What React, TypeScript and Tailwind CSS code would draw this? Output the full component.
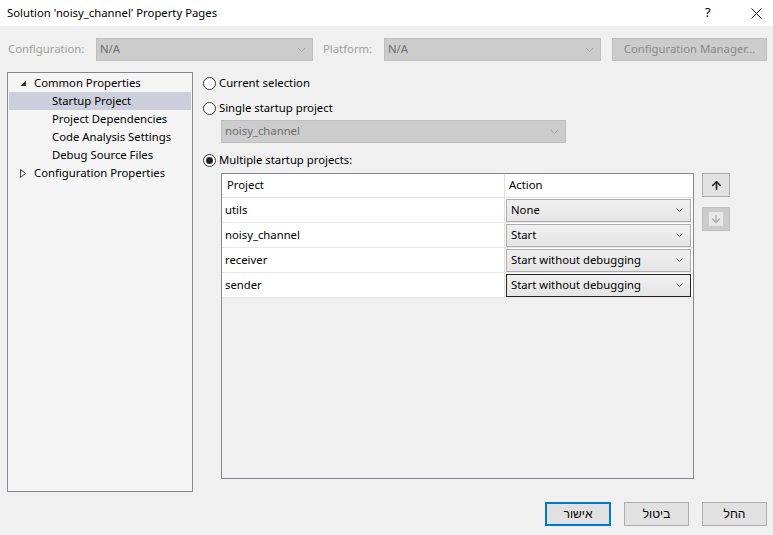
import { ArrowUp, ArrowDown } from 'lucide-react'

const font = { fontFamily: '"Noto Sans", "Liberation Sans", "DejaVu Sans", sans-serif' }

function Chevron({ light }: { light?: boolean }) {
  return (
    <svg width="9" height="6" viewBox="0 0 9 6" className="shrink-0">
      <path d="M1 1 L4.5 4.5 L8 1" fill="none" stroke={light ? '#a8a8a8' : '#606060'} strokeWidth="1" />
    </svg>
  )
}

function Radio({ checked, label }: { checked?: boolean; label: string }) {
  return (
    <div className="flex items-center gap-[3px] h-[18px]">
      <span className="w-[13px] h-[13px] rounded-full border border-[#333] bg-white flex items-center justify-center">
        {checked && <span className="w-[7px] h-[7px] rounded-full bg-[#222]" />}
      </span>
      <span className="text-[11.3px] text-black">{label}</span>
    </div>
  )
}

const treeChildren = ['Startup Project', 'Project Dependencies', 'Code Analysis Settings', 'Debug Source Files']

const rows = [
  { project: 'utils', action: 'None' },
  { project: 'noisy_channel', action: 'Start' },
  { project: 'receiver', action: 'Start without debugging' },
  { project: 'sender', action: 'Start without debugging' },
]

export default function App() {
  return (
    <div style={font} className="w-[773px] h-[535px] bg-[#f0f0f0] flex flex-col overflow-hidden text-black text-[11.3px]">
      {/* title bar */}
      <div className="h-[26px] bg-white flex items-center pl-[7px]">
        <span className="flex-1">Solution 'noisy_channel' Property Pages</span>
        <span className="w-[14px] text-[13px] mr-[32px]">?</span>
        <svg width="11" height="11" viewBox="0 0 11 11" className="mr-[11px]">
          <path d="M0.5 0.5 L10.5 10.5 M10.5 0.5 L0.5 10.5" stroke="#111" strokeWidth="1" />
        </svg>
      </div>

      {/* configuration row */}
      <div className="mt-[12px] h-[23px] flex items-center">
        <span className="w-[96px] pl-[8px] text-[#a0a0a0]">Configuration:</span>
        <div className="w-[217px] h-[23px] bg-[#cccccc] border border-[#bfbfbf] flex items-center pl-[3px] pr-[6px] text-[#6d6d6d]">
          <span className="flex-1">N/A</span>
          <Chevron light />
        </div>
        <span className="w-[71px] pl-[10px] text-[#a0a0a0]">Platform:</span>
        <div className="w-[217px] h-[23px] bg-[#cccccc] border border-[#bfbfbf] flex items-center pl-[3px] pr-[6px] text-[#6d6d6d]">
          <span className="flex-1">N/A</span>
          <Chevron light />
        </div>
        <div className="ml-[11px] w-[155px] h-[23px] bg-[#cccccc] border border-[#bfbfbf] flex items-center justify-center text-[#8a8a8a]">
          Configuration Manager...
        </div>
      </div>

      {/* main */}
      <div className="mt-[11px] flex pl-[7px]">
        <div className="w-[186px] h-[420px] bg-[#f5f5f5] border border-[#828790] pt-[1px] px-[1px]">
          <div className="h-[18px] flex items-center">
            <svg width="7" height="7" viewBox="0 0 7 7" className="ml-[11px] mr-[7px]">
              <path d="M6 0.5 L6 6 L0.5 6 Z" fill="#333" />
            </svg>
            <span>Common Properties</span>
          </div>
          {treeChildren.map((t, i) => (
            <div key={t} className={`h-[18px] flex items-center pl-[43px] ${i === 0 ? 'bg-[#cccedb]' : ''}`}>
              {t}
            </div>
          ))}
          <div className="h-[18px] flex items-center">
            <svg width="7" height="9" viewBox="0 0 7 9" className="ml-[11px] mr-[7px]">
              <path d="M0.5 0.5 L5.5 4.5 L0.5 8.5 Z" fill="none" stroke="#444" strokeWidth="1" />
            </svg>
            <span>Configuration Properties</span>
          </div>
        </div>

        <div className="ml-[10px] pt-[2px] flex flex-col">
          <Radio label="Current selection" />
          <div className="mt-[7px]">
            <Radio label="Single startup project" />
          </div>
          <div className="ml-[18px] mt-[3px] w-[345px] h-[23px] bg-[#cccccc] border border-[#bfbfbf] flex items-center pl-[3px] pr-[6px] text-[#6d6d6d]">
            <span className="flex-1">noisy_channel</span>
            <Chevron light />
          </div>
          <div className="mt-[8px]">
            <Radio checked label="Multiple startup projects:" />
          </div>

          <div className="flex mt-[4px] ml-[18px]">
            <div className="w-[473px] h-[306px] border border-[#828790] bg-[#f0f0f0]">
              <div className="flex h-[24px] bg-white border-b border-[#e0e0e0]">
                <div className="w-[283px] border-r border-[#e0e0e0] flex items-center pl-[5px]">Project</div>
                <div className="flex-1 flex items-center pl-[4px]">Action</div>
              </div>
              {rows.map((r, i) => (
                <div key={r.project} className="flex h-[25px] bg-white border-b border-[#e8e8e8]">
                  <div className="w-[283px] border-r border-[#e0e0e0] flex items-center pl-[3px]">{r.project}</div>
                  <div className="flex-1 flex items-center pl-[1px] pr-[2px]">
                    <div
                      className={`w-full h-[23px] flex items-center pl-[4px] pr-[7px] bg-gradient-to-b from-[#f0f0f0] to-[#e5e5e5] border ${
                        i === 3 ? 'border-[#222]' : 'border-[#acacac]'
                      }`}
                    >
                      <span className="flex-1">{r.action}</span>
                      <svg width="7" height="4" viewBox="0 0 7 4">
                        <path d="M0.5 0.5 L3.5 3.5 L6.5 0.5" fill="none" stroke="#555" strokeWidth="1" />
                      </svg>
                    </div>
                  </div>
                </div>
              ))}
            </div>

            <div className="ml-[8px] flex flex-col">
              <div className="w-[28px] h-[24px] bg-[#e1e1e1] border border-[#adadad] flex items-center justify-center">
                <ArrowUp size={13} strokeWidth={3} color="#222" />
              </div>
              <div className="mt-[10px] w-[28px] h-[24px] bg-[#cccccc] border border-[#bfbfbf] flex items-center justify-center">
                <div className="bg-[#e8e8e8] w-[14px] h-[14px] flex items-center justify-center">
                  <ArrowDown size={12} strokeWidth={2.5} color="#aaaaaa" />
                </div>
              </div>
            </div>
          </div>
        </div>
      </div>

      {/* bottom buttons */}
      <div className="mt-[10px] flex justify-end pr-[6px] gap-[13px] text-[12px]">
        <div dir="rtl" className="w-[66px] h-[24px] bg-[#e1e1e1] border-2 border-[#0078d7] flex items-center justify-center">
          אישור
        </div>
        <div dir="rtl" className="w-[65px] h-[24px] bg-[#e1e1e1] border border-[#adadad] flex items-center justify-center">
          ביטול
        </div>
        <div dir="rtl" className="w-[65px] h-[24px] bg-[#e1e1e1] border border-[#adadad] flex items-center justify-center">
          החל
        </div>
      </div>
    </div>
  )
}
